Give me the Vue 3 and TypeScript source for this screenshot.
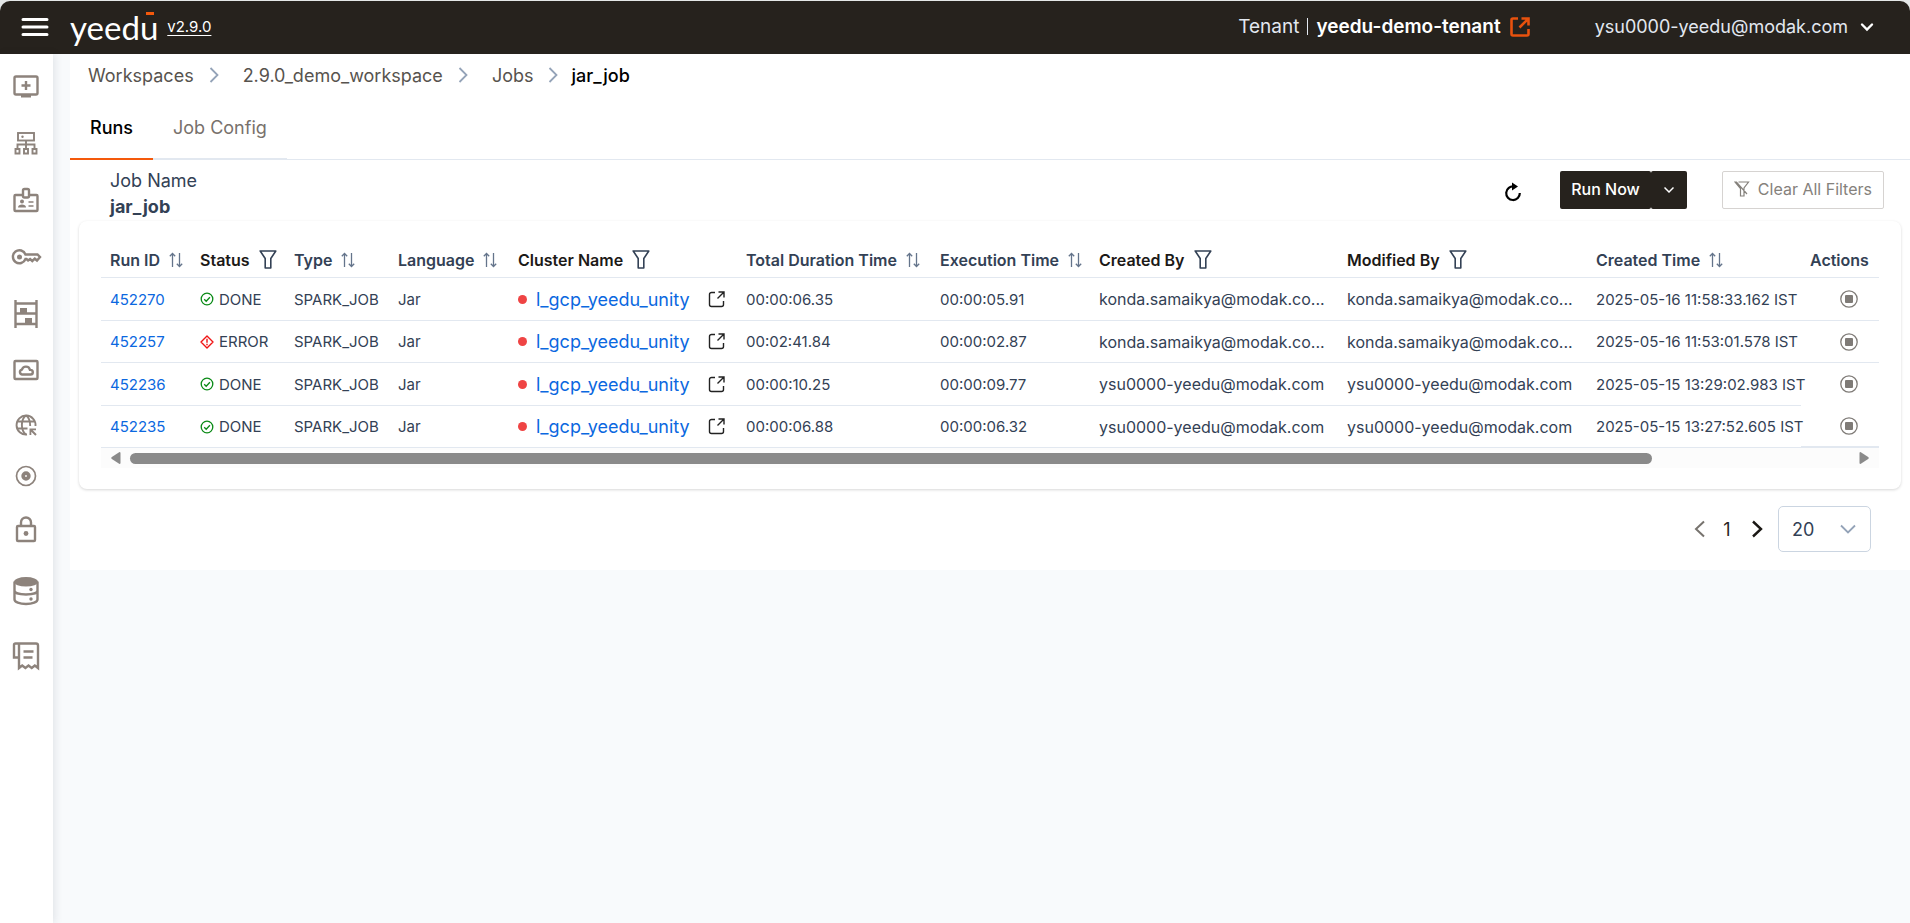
<script setup lang="ts">
import { ref } from 'vue'

interface Column {
  label: string
  kind: 'sort' | 'filter' | 'none'
  width: number
}

interface Run {
  id: number
  status: 'DONE' | 'ERROR'
  total: string
  execution: string
  user: string
  created: string
}

const columns: Column[] = [
  { label: 'Run ID', kind: 'sort', width: 90 },
  { label: 'Status', kind: 'filter', width: 94 },
  { label: 'Type', kind: 'sort', width: 104 },
  { label: 'Language', kind: 'sort', width: 120 },
  { label: 'Cluster Name', kind: 'filter', width: 228 },
  { label: 'Total Duration Time', kind: 'sort', width: 194 },
  { label: 'Execution Time', kind: 'sort', width: 159 },
  { label: 'Created By', kind: 'filter', width: 248 },
  { label: 'Modified By', kind: 'filter', width: 249 },
  { label: 'Created Time', kind: 'sort', width: 214 },
  { label: 'Actions', kind: 'none', width: 78 },
]

const runs: Run[] = [
  { id: 452270, status: 'DONE', total: '00:00:06.35', execution: '00:00:05.91', user: 'konda.samaikya@modak.co...', created: '2025-05-16 11:58:33.162 IST' },
  { id: 452257, status: 'ERROR', total: '00:02:41.84', execution: '00:00:02.87', user: 'konda.samaikya@modak.co...', created: '2025-05-16 11:53:01.578 IST' },
  { id: 452236, status: 'DONE', total: '00:00:10.25', execution: '00:00:09.77', user: 'ysu0000-yeedu@modak.com', created: '2025-05-15 13:29:02.983 IST' },
  { id: 452235, status: 'DONE', total: '00:00:06.88', execution: '00:00:06.32', user: 'ysu0000-yeedu@modak.com', created: '2025-05-15 13:27:52.605 IST' },
]

const crumbs = ['Workspaces', '2.9.0_demo_workspace', 'Jobs']
const tabs = ['Runs', 'Job Config']
const activeTab = ref('Runs')
const pageSize = ref('20')
</script>

<template>
  <div class="app">
    <header class="topbar">
      <button class="plain burger" aria-label="Menu">
        <svg width="28" height="22" viewBox="0 0 28 22" stroke="#fff" stroke-width="3" stroke-linecap="round"><path d="M2 3.5h24M2 11h24M2 18.5h24" /></svg>
      </button>
      <a href="#" class="logo">yeedu<span class="logo-bar"></span></a>
      <a href="#" class="version">v2.9.0</a>
      <div class="tenant">
        <span class="tenant-label">Tenant</span>
        <span class="divider"></span>
        <strong>yeedu-demo-tenant</strong>
        <button class="plain" aria-label="Switch tenant">
          <svg width="22" height="22" viewBox="0 0 22 22" fill="none" stroke="#e8520e" stroke-width="2.6"><path d="M9 2.5H4A1.5 1.5 0 0 0 2.5 4v14A1.5 1.5 0 0 0 4 19.5h14a1.5 1.5 0 0 0 1.5-1.5v-5M12.500 2.500h7v7M19 3l-8.500 8.500" /></svg>
        </button>
      </div>
      <button class="plain user">
        <span>ysu0000-yeedu@modak.com</span>
        <svg width="14" height="14" viewBox="0 0 14 14" fill="none" stroke="#fff" stroke-width="2.4" stroke-linecap="round"><path d="M2 4.500l5 5 5-5" /></svg>
      </button>
    </header>

    <div class="body">
      <nav class="sidebar" aria-label="Main">
        <a href="#" aria-label="Notebooks"><svg viewBox="0 0 32 32"><rect x="4.500" y="6.500" width="23" height="18" rx="1.500" /><path d="M16 11v9M11.500 15.500h9" /><path d="M11 25h10v2.500H11z" class="solid" /></svg></a>
        <a href="#" aria-label="Clusters"><svg viewBox="0 0 32 32" class="thin"><rect x="8" y="6" width="16" height="7.500" /><path d="M16 13.500V22M7.500 22v-4.500h17V22" /><path d="M5.500 22h4v4.500h-4zM14 22h4v4.500h-4zM22.500 22h4v4.500h-4z" /><circle cx="12.500" cy="9.800" r="1.200" class="solid" /></svg></a>
        <a href="#" aria-label="Credentials"><svg viewBox="0 0 32 32"><path d="M13 11H5.500A1 1 0 0 0 4.500 12v14a1 1 0 0 0 1 1h21a1 1 0 0 0 1-1V12a1 1 0 0 0-1-1H19" /><rect x="13" y="5" width="6" height="8.500" rx="1.500" /><circle cx="12" cy="17.500" r="2" class="solid" /><path d="M8 23.500c0-2.200 2-3 4-3s4 .8 4 3z" class="solid" /><path d="M18.500 18H23.500M18.500 22H23.500" stroke-width="1.500" /></svg></a>
        <a href="#" aria-label="Secrets"><svg viewBox="0 0 32 32"><path d="M15.500 13.500H27.500L30 16l-3 3.500-2.200-1.800L22.300 20l-2.200-2-2 1.500-1.600-1.500h-1A6.500 6.500 0 1 1 15.500 13.500z" /><circle cx="9.500" cy="16" r="2.500" class="solid" /></svg></a>
        <a href="#" aria-label="Storage"><svg viewBox="0 0 32 32"><path d="M5.500 2v28M26.500 2v28M5.500 5.500h21M5.500 15.500h21M5.500 26h21" /><path d="M10 10h7v5.500h-7zM15 20h7v6h-7z" class="solid" /></svg></a>
        <a href="#" aria-label="Cloud"><svg viewBox="0 0 32 32"><rect x="4.500" y="7" width="23" height="18" rx="1" /><path d="M12 20.500h8.500a2.300 2.300 0 0 0 0-4.600h-.5a4.200 4.200 0 0 0-8.100-.3A2.500 2.500 0 0 0 12 20.500z" /></svg></a>
        <a href="#" aria-label="Network"><svg viewBox="0 0 32 32" class="thin"><path d="M17 25.500A9.500 9.500 0 1 1 25.500 17" /><path d="M16 25.500c-5.500-4-5.500-15 0-19M16 6.500c3 2 4.200 5.500 4.200 10.500M7.500 12.500h17M7.500 19.500h10" /><path d="M19.500 19.500h6.500v1.800h-3.300l4 4-1.400 1.400-4-4V26h-1.800z" class="solid" /></svg></a>
        <a href="#" aria-label="Monitoring"><svg viewBox="0 0 32 32"><circle cx="16" cy="16" r="9.500" stroke-width="1.700" /><circle cx="16" cy="16" r="2.800" stroke-width="3.800" /></svg></a>
        <a href="#" aria-label="Access"><svg viewBox="0 0 32 32"><rect x="7" y="13" width="18" height="15" rx="1" /><path d="M11 13V9.500a5 5 0 0 1 10 0V13" /><circle cx="16" cy="20.500" r="2.400" class="solid" /></svg></a>
        <a href="#" aria-label="Metastore"><svg viewBox="0 0 32 32"><path d="M4.500 6.500v18c0 2.500 5 4.500 11.500 4.500s11.500-2 11.500-4.500v-18M4.500 15.500c0 2.500 5 4 11.500 4s11.500-1.500 11.500-4" /><ellipse cx="16" cy="6.800" rx="12" ry="4.800" class="solid" /><circle cx="21" cy="14.500" r="1.700" class="solid" /><circle cx="21" cy="24" r="1.700" class="solid" /></svg></a>
        <a href="#" aria-label="Billing"><svg viewBox="0 0 32 32"><path d="M9 28V3.500h17a2 2 0 0 1 2 2V28l-3.200-2.500-3.100 2.500-3.200-2.500-3.100 2.500-3.200-2.500zM9 3.500H5.500A1.500 1.500 0 0 0 4 5v12.500h5M13.500 11.500h10M13.500 17.500h9" /></svg></a>
      </nav>

      <main class="main">
        <nav class="crumbs" aria-label="Breadcrumb">
          <template v-for="c in crumbs" :key="c">
            <a href="#">{{ c }}</a>
            <svg width="10" height="16" viewBox="0 0 10 16" fill="none" stroke="#94a3b8" stroke-width="1.8"><path d="M1.500 1l7 7-7 7" /></svg>
          </template>
          <span class="current">jar_job</span>
        </nav>

        <div class="tabs" role="tablist">
          <button v-for="t in tabs" :key="t" role="tab" class="tab" :class="{ active: t === activeTab }" :aria-selected="t === activeTab" @click="activeTab = t">{{ t }}</button>
        </div>

        <section class="toolbar">
          <div class="job">
            <span>Job Name</span>
            <strong>jar_job</strong>
          </div>
          <button class="plain refresh" aria-label="Refresh">
            <svg width="18" height="20" viewBox="0 0 18 20" fill="none" stroke="#000" stroke-width="2.2"><path d="M10 4.500A6.800 6.800 0 1 0 15.800 11" /><path d="M8 .5l6 4-6 4z" fill="#000" stroke="none" /></svg>
          </button>
          <div class="split">
            <button class="dark">Run Now</button>
            <button class="dark more" aria-label="More run options">
              <svg width="10" height="8" viewBox="0 0 10 8" fill="none" stroke="#fff" stroke-width="1.5"><path d="M.5 1.500l4.500 4.500 4.500-4.500" /></svg>
            </button>
          </div>
          <button class="clear">
            <svg width="16" height="16" viewBox="0 0 16 16" fill="none" stroke="#85817c" stroke-width="1.2"><path d="M4.500 1h10l-4.500 6v8H6.500V7.500L1 1h1.500L13 13" /></svg>
            <span>Clear All Filters</span>
          </button>
        </section>

        <section class="card">
          <table>
            <colgroup>
              <col v-for="c in columns" :key="c.label" :style="{ width: (c.width / 1778) * 100 + '%' }" />
            </colgroup>
            <thead>
              <tr>
                <th v-for="c in columns" :key="c.label" scope="col" :class="c.kind">
                  <span class="head">
                    {{ c.label }}
                    <button v-if="c.kind === 'sort'" class="plain" :aria-label="'Sort by ' + c.label">
                      <svg width="14" height="16" viewBox="0 0 14 16" fill="none" stroke="#64748b" stroke-width="1.3"><path d="M3.500 15V1.500M.8 4.200l2.700-2.700 2.700 2.700M10.500 1v13.500M7.800 11.800l2.700 2.700 2.700-2.700" /></svg>
                    </button>
                    <button v-if="c.kind === 'filter'" class="plain" :aria-label="'Filter by ' + c.label">
                      <svg width="18" height="19" viewBox="0 0 18 19" fill="none" stroke="#334155" stroke-width="1.6"><path d="M1.200 1h15.600l-5 7.500v9.500H6.200V8.500z" stroke-linejoin="round" /></svg>
                    </button>
                  </span>
                </th>
              </tr>
            </thead>
            <tbody>
              <tr v-for="r in runs" :key="r.id">
                <td><a href="#">{{ r.id }}</a></td>
                <td>
                  <span class="status">
                    <svg v-if="r.status === 'DONE'" width="14" height="14" viewBox="0 0 14 14" fill="none" stroke="#0a8a16" stroke-width="1.3"><circle cx="7" cy="7" r="5.800" /><path d="M4.200 7.200l2 2 3.700-4" /></svg>
                    <svg v-else width="14" height="14" viewBox="0 0 14 14" fill="none" stroke="#f01414" stroke-width="1.4" stroke-linejoin="round"><path d="M7 1l6 6-6 6-6-6zM7 3.800v4M7 8.800v1.500" /></svg>
                    {{ r.status }}
                  </span>
                </td>
                <td>SPARK_JOB</td>
                <td>Jar</td>
                <td>
                  <span class="cluster">
                    <i class="dot"></i>
                    <a href="#">l_gcp_yeedu_unity</a>
                    <button class="plain" aria-label="Open cluster">
                      <svg width="17" height="17" viewBox="0 0 17 17" fill="none" stroke="#222" stroke-width="1.4"><path d="M7 1.500H3.500a2 2 0 0 0-2 2v10a2 2 0 0 0 2 2h10a2 2 0 0 0 2-2V10M10.500 1h5.500v5.500M16 1L9.500 7.500" /></svg>
                    </button>
                  </span>
                </td>
                <td>{{ r.total }}</td>
                <td>{{ r.execution }}</td>
                <td class="email">{{ r.user }}</td>
                <td class="email">{{ r.user }}</td>
                <td>{{ r.created }}</td>
                <td class="actions">
                  <button class="plain" aria-label="Stop run">
                    <svg width="18" height="18" viewBox="0 0 18 18"><circle cx="9" cy="9" r="8.200" fill="none" stroke="#7f7b77" stroke-width="1.3" /><rect x="5" y="5" width="8" height="8" rx="1" fill="#7f7b77" /></svg>
                  </button>
                </td>
              </tr>
            </tbody>
          </table>
          <div class="scroll">
            <button class="plain" aria-label="Scroll left"><svg width="10" height="12" viewBox="0 0 10 12" fill="#8a8a8a"><path d="M8.500 0Q9.500 0 9.500 1v10q0 1-1 1L.5 6.800Q0 6 .5 5.200z" /></svg></button>
            <div class="track"><div class="thumb"></div></div>
            <button class="plain" aria-label="Scroll right"><svg width="10" height="12" viewBox="0 0 10 12" fill="#8a8a8a"><path d="M1.500 0Q.5 0 .5 1v10q0 1 1 1l8-5.200q.5-.8 0-1.600z" /></svg></button>
          </div>
        </section>

        <footer class="pager">
          <button class="plain" aria-label="Previous page"><svg width="11" height="18" viewBox="0 0 11 18" fill="none" stroke="#77736e" stroke-width="2"><path d="M10 1.500L2 9l8 7.500" /></svg></button>
          <span class="page">1</span>
          <button class="plain next" aria-label="Next page"><svg width="11" height="18" viewBox="0 0 11 18" fill="none" stroke="#1a1714" stroke-width="2.4"><path d="M1 1.500L9 9l-8 7.500" /></svg></button>
          <div class="size">
            <select v-model="pageSize" aria-label="Rows per page">
              <option>20</option>
              <option>50</option>
            </select>
            <svg width="16" height="10" viewBox="0 0 16 10" fill="none" stroke="#94a3b8" stroke-width="1.8"><path d="M1 1.500l7 7 7-7" /></svg>
          </div>
        </footer>
      </main>
    </div>
  </div>
</template>

<style>
body {
  margin: 0;
  background: #f8fafc;
}
</style>

<style scoped>
* {
  box-sizing: border-box;
}
.app {
  display: flex;
  flex-direction: column;
  min-height: 100vh;
  padding-top: 1px;
  background: #e4e7e7;
  color: #334155;
  font-family: Inter, "Open Sans", sans-serif;
  font-size: 15px;
}
svg {
  display: block;
  flex: none;
}
a {
  color: #0b68e0;
  text-decoration: none;
}
button,
select {
  font: inherit;
  color: inherit;
  cursor: pointer;
}
.plain {
  padding: 0;
  border: 0;
  background: none;
}
.topbar {
  display: flex;
  align-items: center;
  height: 53px;
  padding: 0 36px 2px 21px;
  background: #26221d;
  border-radius: 10px 10px 0 0;
  color: #e2e8f0;
  font-size: 18px;
}
.logo {
  position: relative;
  margin-left: 21px;
  color: #fff;
  font-family: Lato, sans-serif;
  font-size: 33px;
  line-height: 44px;
}
.logo-bar {
  position: absolute;
  top: 7px;
  right: 4px;
  width: 8px;
  height: 3px;
  background: #f4590c;
}
.version {
  margin-left: 9px;
  color: #fff;
  font-size: 15px;
  text-decoration: underline;
  text-underline-offset: 3px;
}
.tenant {
  display: flex;
  align-items: center;
  gap: 8px;
  margin-left: auto;
  font-size: 19px;
}
.tenant strong {
  color: #fff;
  font-weight: 600;
}
.divider {
  width: 1px;
  height: 17px;
  background: #e2e8f0;
}
.user {
  display: flex;
  align-items: center;
  gap: 12px;
  margin-left: 64px;
}
.body {
  display: flex;
  flex: 1;
  background: #f8fafc;
}
.sidebar {
  flex: none;
  width: 53px;
  padding: 3px 1px 0 0;
  background: #fff;
  box-shadow: 2px 0 8px rgba(30, 41, 59, 0.1);
}
.sidebar a {
  display: flex;
  align-items: center;
  justify-content: center;
  height: 57px;
}
.sidebar a:nth-child(6),
.sidebar a:nth-child(7) {
  height: 55px;
}
.sidebar a:nth-child(8) {
  height: 48px;
}
.sidebar a:nth-child(9) {
  height: 58px;
}
.sidebar a:nth-child(n + 10) {
  height: 65px;
}
.sidebar svg {
  width: 32px;
  height: 32px;
  fill: none;
  stroke: #8d837c;
  stroke-width: 2.4;
}
.sidebar .thin {
  stroke-width: 1.9;
}
.sidebar .solid {
  fill: #8d837c;
  stroke: none;
}
.main {
  flex: 1;
  min-width: 0;
  align-self: flex-start;
  margin-left: 17px;
  padding-bottom: 18px;
  background: #fff;
}
.crumbs {
  display: flex;
  align-items: center;
  height: 42px;
  padding-left: 18px;
  font-size: 18px;
}
.crumbs a {
  color: #57534e;
}
.crumbs svg {
  margin: 0 24px 0 15px;
}
.crumbs svg:last-of-type {
  margin-right: 13px;
}
.current {
  color: #000;
  font-weight: 500;
}
.tabs {
  display: flex;
  height: 64px;
  border-bottom: 1px solid #e2e8f0;
}
.tab {
  height: 64px;
  padding: 0 20px;
  border: 0;
  border-bottom: 2px solid #e2e8f0;
  background: none;
  color: #78716c;
  font-size: 18px;
}
.tab.active {
  border-color: #f4590c;
  color: #000;
  font-weight: 500;
}
.toolbar {
  display: flex;
  align-items: flex-start;
  height: 61px;
  padding: 11px 26px 0 40px;
}
.job {
  display: flex;
  flex-direction: column;
  flex: 1;
  margin-top: -3px;
  font-size: 18px;
  line-height: 26px;
}
.refresh {
  margin: 11px 38px 0 0;
}
.split {
  display: flex;
  margin-right: 35px;
}
.dark {
  height: 38px;
  padding: 0 11px 2px;
  border: 0;
  border-radius: 2px;
  background: #26221d;
  color: #fff;
  font-size: 16px;
  font-weight: 500;
}
.more {
  display: flex;
  align-items: center;
  padding: 0 13px;
}
.clear {
  display: flex;
  align-items: center;
  gap: 8px;
  height: 38px;
  padding: 0 11px 2px;
  border: 1px solid #d6d3d1;
  border-radius: 2px;
  background: #fff;
  color: #85817c;
  font-size: 16px;
}
.card {
  margin: 0 9px;
  padding: 21px 22px;
  border-radius: 8px;
  background: #fff;
  box-shadow: 0 1px 3px rgba(0, 0, 0, 0.16);
}
table {
  width: 100%;
  table-layout: fixed;
  border-collapse: separate;
  border-spacing: 0;
}
th,
td {
  padding: 0 0 0 9px;
  border-bottom: 1px solid #e2e8f0;
  text-align: left;
  white-space: nowrap;
}
th {
  height: 36px;
  font-size: 16px;
  font-weight: 600;
}
th.filter {
  color: #1c1917;
}
.head {
  display: flex;
  align-items: center;
  gap: 9px;
}
td {
  height: 42px;
}
tr:nth-child(odd) td {
  height: 43px;
}
.status {
  display: flex;
  align-items: center;
  gap: 5px;
}
.cluster {
  display: flex;
  align-items: center;
  padding-right: 12px;
}
.dot {
  width: 9px;
  height: 9px;
  border-radius: 50%;
  background: #ef4444;
}
.cluster a {
  flex: 1;
  margin-left: 9px;
  font-size: 18px;
}
.email {
  font-size: 16px;
}
.actions .plain {
  display: block;
  margin-left: 30px;
}
tr:nth-child(3) .actions {
  border-bottom-color: transparent;
}
tr:nth-child(4) .actions {
  border-bottom-width: 2px;
}
.scroll {
  display: flex;
  align-items: center;
  gap: 9px;
  height: 20px;
  padding: 0 10px;
  background: #fcfcfc;
}
.track {
  flex: 1;
}
.thumb {
  width: 88.500%;
  height: 11px;
  border-radius: 6px;
  background: #8a8a8a;
}
.pager {
  display: flex;
  align-items: center;
  justify-content: flex-end;
  gap: 17px;
  margin-top: 17px;
  padding-right: 39px;
  font-size: 18px;
}
.page {
  min-width: 10px;
  color: #292524;
  text-align: center;
}
.next {
  margin: 0 -2px 0 3px;
}
.size {
  display: flex;
  align-items: center;
  position: relative;
}
.size select {
  width: 93px;
  height: 46px;
  padding: 0 13px;
  border: 1px solid #cbd5e1;
  border-radius: 5px;
  background: #fff;
  font-size: 18px;
  appearance: none;
}
.size svg {
  position: absolute;
  right: 15px;
  pointer-events: none;
}
</style>
